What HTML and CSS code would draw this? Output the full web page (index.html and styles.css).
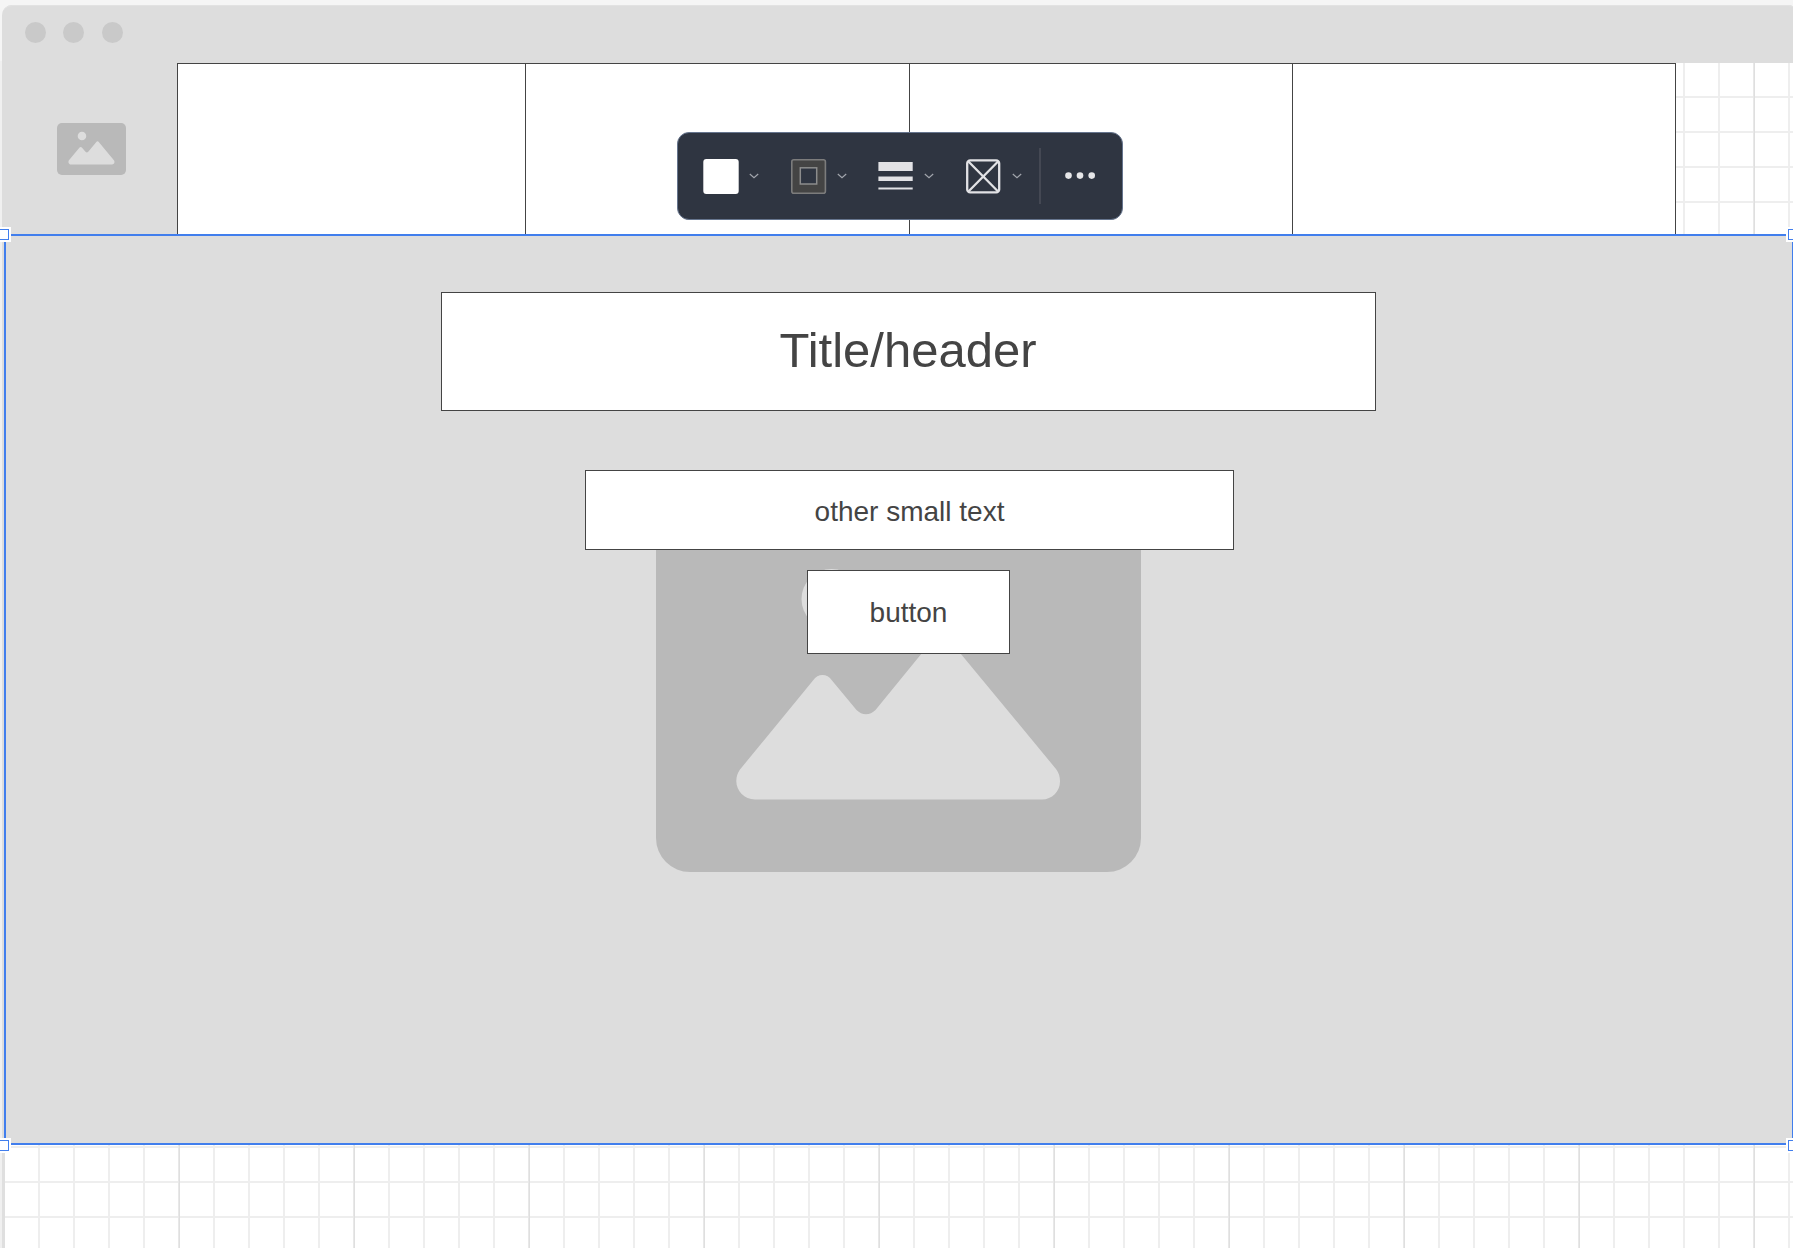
FILE: index.html
```html
<!DOCTYPE html>
<html lang="en">
<head>
<meta charset="utf-8">
<title>Wireframe editor</title>
<link rel="stylesheet" href="styles.css">
</head>
<body>
<svg class="defs" aria-hidden="true">
  <symbol id="picture" viewBox="0 0 485 364">
    <rect width="485" height="364" rx="34" fill="#b9b9b9"/>
    <circle cx="175.5" cy="91" r="30" fill="#ddd"/>
    <path fill="#ddd" d="M84 261.500L157 172.500C162 165.300 171 165.300 176 172.500L200.500 202C206 207.700 214 207.700 219.500 202L275 134Q285 122 295 134L400 261C403 265 404 269 404 273.500C404 283.500 396 291.500 386 291.500H99C88.500 291.500 80.300 283 80.300 273C80.300 269 81.500 265 84 261.500Z"/>
  </symbol>
  <symbol id="chevron" viewBox="0 0 10 6">
    <path d="M.8 1L5 4.600L9.200 1" fill="none" stroke="#a3a6ad" stroke-width="1.200"/>
  </symbol>
</svg>

<main class="canvas">
  <div class="grid"></div>
  <div class="page-edge"></div>

  <section class="browser">
    <header class="titlebar">
      <i class="dot"></i><i class="dot"></i><i class="dot dot-last"></i>
    </header>
    <div class="site-header">
      <div class="logo"><svg width="69" height="52"><use href="#picture"/></svg></div>
      <nav class="tabs">
        <div class="tab"></div><div class="tab"></div><div class="tab"></div><div class="tab"></div>
      </nav>
    </div>
    <div class="hero"></div>
  </section>

  <svg class="hero-picture" width="485" height="364"><use href="#picture"/></svg>
  <div class="shape title">Title/header</div>
  <div class="shape subtitle">other small text</div>
  <div class="shape button">button</div>

  <div class="selection">
    <i class="handle nw"></i><i class="handle ne"></i><i class="handle sw"></i><i class="handle se"></i>
  </div>

  <div class="toolbar">
    <div class="tool">
      <svg width="36" height="36"><rect x=".3" y="0" width="35.400" height="35" rx="3" fill="#fff"/></svg>
      <svg class="chevron" width="10" height="6"><use href="#chevron"/></svg>
    </div>
    <div class="tool">
      <svg width="36" height="36"><rect x=".8" y=".8" width="33.600" height="33.400" rx="2" fill="#444" stroke="#7c7c7c" stroke-width="1.600"/><rect x="9.300" y="8.800" width="16.400" height="16.200" fill="#2f3541" stroke="#8c8c8c" stroke-width="1.500"/></svg>
      <svg class="chevron" width="10" height="6"><use href="#chevron"/></svg>
    </div>
    <div class="tool">
      <svg width="36" height="36"><path fill="#e2e2e5" d="M.4 3H34.700V12H.4zM.4 17.500H34.700V22H.4zM.4 28.500H34.700V30.500H.4z"/></svg>
      <svg class="chevron" width="10" height="6"><use href="#chevron"/></svg>
    </div>
    <div class="tool">
      <svg width="36" height="36"><g fill="none" stroke="#e2e2e5" stroke-width="2.300"><rect x="1.200" y="1.400" width="32" height="32" rx="3"/><path d="M2.200 2.200L32.300 32.800M32.300 2.200L2.200 32.800"/></g></svg>
      <svg class="chevron" width="10" height="6"><use href="#chevron"/></svg>
    </div>
    <div class="divider"></div>
    <svg class="more" width="32" height="8" fill="#e6e6e8"><circle cx="4.500" cy="3.600" r="3.300"/><circle cx="16" cy="3.600" r="3.300"/><circle cx="27.700" cy="3.600" r="3.300"/></svg>
  </div>
</main>
</body>
</html>
```
FILE: styles.css
```css
* { box-sizing: border-box; }

body {
  margin: 0;
  font-family: "Liberation Sans", Arial, sans-serif;
  color: #444;
}

svg { display: block; flex: none; }

.defs { position: absolute; width: 0; height: 0; }

.canvas {
  position: relative;
  width: 1793px;
  height: 1248px;
  overflow: hidden;
  background: #f5f5f5;
}

.grid {
  position: absolute;
  inset: 61px 0 0 4px;
  background-color: #fff;
  background-image:
    linear-gradient(90deg, #e8e8e8 1px, #dfdfdf 1px, #dfdfdf 2px, transparent 2px),
    linear-gradient(90deg, #eee 2px, transparent 2px),
    linear-gradient(#eee 2px, transparent 2px);
  background-size: 175px 100%, 35px 100%, 100% 35px;
  background-position: -1px 0, -1px 0, 0 0;
}

.page-edge {
  position: absolute;
  inset: 61px auto 0 0;
  width: 4px;
  background: linear-gradient(90deg, #f0f0f0 2px, #dfdfdf 2px);
}

.browser {
  position: absolute;
  left: 2px;
  top: 5px;
  width: 1796px;
}

.titlebar {
  display: flex;
  gap: 17px;
  height: 58px;
  padding: 17px 23px;
  background: #ddd;
  border-radius: 10px 10px 0 0;
  box-shadow: inset 0 1px #e2e2e2;
}

.dot {
  width: 21px;
  height: 21px;
  border-radius: 50%;
  background: #c9c9c9;
}

.dot-last { margin-left: 1px; }

.site-header { display: flex; height: 172px; }

.logo {
  width: 175px;
  padding: 60px 0 0 55px;
  background: #ddd;
}

.tabs {
  display: grid;
  grid-template-columns: 348px 384px 383px 384px;
  background: #fff;
  border-top: 1px solid #444;
}

.tab { border-left: 1px solid #444; }
.tab:last-child { border-right: 1px solid #444; }

.hero {
  height: 909px;
  background: #ddd;
}

.hero-picture { position: absolute; left: 656px; top: 508px; }

.shape {
  position: absolute;
  display: flex;
  align-items: center;
  justify-content: center;
  background: #fff;
  border: 1px solid #444;
  font-size: 28px;
  line-height: 1;
  white-space: nowrap;
}

.title { left: 441px; top: 292px; width: 935px; height: 119px; padding: 0 1px 2px 0; font-size: 49px; }
.subtitle { left: 585px; top: 470px; width: 649px; height: 80px; padding-top: 3px; }
.button { left: 807px; top: 570px; width: 203px; height: 84px; padding-top: 2px; }

.selection {
  position: absolute;
  left: 4px;
  top: 234px;
  width: 1790px;
  height: 911px;
  border: 2px solid #417eed;
}

.handle {
  position: absolute;
  width: 11px;
  height: 11px;
  background: #fff;
  border: 1px solid #417eed;
  box-shadow: 0 0 0 2px #fff;
}

.nw { left: -8px; top: -7px; }
.ne { right: -7px; top: -7px; }
.sw { left: -8px; bottom: -8px; }
.se { right: -7px; bottom: -8px; }

.toolbar {
  position: absolute;
  left: 677px;
  top: 132px;
  display: flex;
  align-items: flex-start;
  width: 446px;
  height: 88px;
  padding: 26px 0 0 25px;
  background: #2f3541;
  border: 1px solid #66758e;
  border-radius: 12px;
}

.tool { display: flex; width: 87.700px; }
.chevron { margin: 14px 0 0 10px; }

.divider {
  width: 2px;
  height: 56px;
  margin: -11px 0 0 -15px;
  background: #444853;
}

.more { margin: 12.500px 0 0 23px; }
```
